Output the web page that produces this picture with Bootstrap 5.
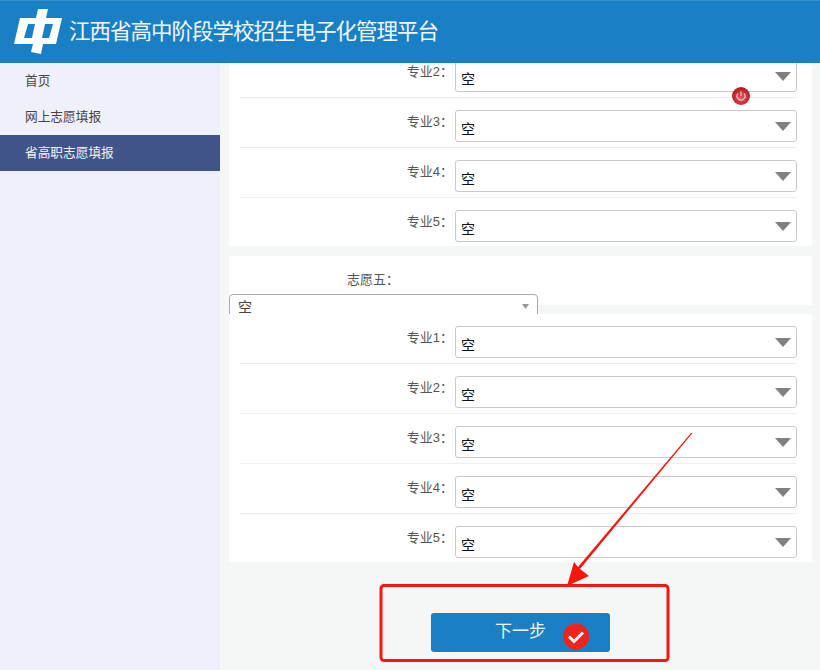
<!DOCTYPE html>
<html lang="zh-CN">
<head>
<meta charset="utf-8">
<title>江西省高中阶段学校招生电子化管理平台</title>
<link href="https://cdn.jsdelivr.net/npm/bootstrap@5.3.0/dist/css/bootstrap.min.css" rel="stylesheet">
<style>
html,body{height:100%;overflow:hidden}
body{font-family:"Liberation Sans","Noto Sans CJK SC",sans-serif;background:#f5f6f6;color:#555;width:820px;height:670px;position:relative}
.top-bar{height:63px;background:#1a80c6;border-top:1px solid #3a93d0;padding:0 0 0 14px;flex-wrap:nowrap;justify-content:flex-start;position:relative;z-index:2}
.brand-logo{display:block;flex:none}
.brand-name{font-size:21.5px;letter-spacing:-1px;color:#f2f8fc;margin-left:6px;padding:0;white-space:nowrap;line-height:28px;margin-top:-1px}
.side-col{width:220px;flex:none;background:#eff0fa}
.side-col .nav-link{height:36px;line-height:36px;padding:0 0 0 25px;font-size:12.7px;color:#444}
.side-col .nav-link.active{background:#415489;color:#f3f4f8}
.main-col{width:600px;flex:none;height:607px;overflow:hidden;padding:0 8px 0 9px}
.form-panel{background:#fff;border:0;border-radius:0;margin-bottom:10px}
.panel-first{margin-top:-15px}
.panel-major{padding:0 15px 0 11px}
.major-row{height:50px;padding-top:12px;border-bottom:1px solid #eeeeee;display:flex}
.major-row:last-child{border-bottom:0;height:48px}
.field-label{font-size:13px;color:#555;line-height:24px;white-space:nowrap;text-align:right}
.major-row .field-label{width:215px;padding-right:2px}
.form-select.pick-big{height:32px;border:1px solid #c9c9c9;border-radius:3px;padding:5px 0 0 5px;font-size:14px;line-height:24px;color:#111;background-image:url("data:image/svg+xml,%3Csvg xmlns='http://www.w3.org/2000/svg' width='16' height='9'%3E%3Cpath d='M0 0h16L8 9z' fill='%23808080'/%3E%3C/svg%3E");background-size:16px 9px;background-position:right 5px center;flex:1;min-width:0}
.panel-wish{height:49px;padding:10px 0 0 0;display:flex;margin-bottom:9px}
.panel-wish .field-label{width:170px;padding-right:0;line-height:28px;height:28px}
.form-select.pick-small{width:309px;height:28px;border:1px solid #aaa;border-radius:4px;padding:2px 0 0 8px;font-size:14px;color:#444;background-image:url("data:image/svg+xml,%3Csvg xmlns='http://www.w3.org/2000/svg' width='7' height='5'%3E%3Cpath d='M0 0h7L3.500 5z' fill='%23999'/%3E%3C/svg%3E");background-size:7px 5px;background-position:right 8px center}
.action-row{height:39px;margin-top:51px}
.next-btn{width:179px;height:39px;background:#1a7fc5;border:0;border-radius:3px;color:#eef6fb;font-size:17px;padding:0;margin-left:202px;position:relative}
.next-btn:hover{background:#1a7fc5;color:#eef6fb}
.next-label{position:absolute;left:64px;top:7px;line-height:24px}
.overlay-mark{position:absolute;left:0;top:0;z-index:3;pointer-events:none}
.power-dot{position:absolute;left:732px;top:87px;z-index:1}
.first-gap{position:absolute;left:455px;top:90px;width:342px;height:3px;z-index:1;background:repeating-linear-gradient(90deg,#fff 0 1px,#fff 1px 1px);}
</style>
</head>
<body>
<nav class="navbar top-bar">
  <svg class="brand-logo" width="49" height="48" viewBox="0 0 49 48">
    <path fill="#fff" d="M24 1h10l-2 9h16l-6 26H29l-2 10-10-2 2-8H0L6 10h16zM14 16l-4 14h8l3-14zM31 16l-3 14h7l4-14z"/>
  </svg>
  <span class="navbar-brand brand-name">江西省高中阶段学校招生电子化管理平台</span>
</nav>
<div class="d-flex">
  <aside class="side-col">
    <nav class="nav flex-column">
      <a class="nav-link" href="#">首页</a>
      <a class="nav-link" href="#">网上志愿填报</a>
      <a class="nav-link active" href="#">省高职志愿填报</a>
    </nav>
  </aside>
  <main class="main-col">
    <div class="card form-panel panel-major panel-first">
      <div class="major-row"><span class="field-label">专业2：</span><select class="form-select pick-big"><option>空</option></select></div>
      <div class="major-row"><span class="field-label">专业3：</span><select class="form-select pick-big"><option>空</option></select></div>
      <div class="major-row"><span class="field-label">专业4：</span><select class="form-select pick-big"><option>空</option></select></div>
      <div class="major-row"><span class="field-label">专业5：</span><select class="form-select pick-big"><option>空</option></select></div>
    </div>
    <div class="card form-panel panel-wish">
      <span class="field-label">志愿五：</span><select class="form-select pick-small"><option>空</option></select>
    </div>
    <div class="card form-panel panel-major">
      <div class="major-row"><span class="field-label">专业1：</span><select class="form-select pick-big"><option>空</option></select></div>
      <div class="major-row"><span class="field-label">专业2：</span><select class="form-select pick-big"><option>空</option></select></div>
      <div class="major-row"><span class="field-label">专业3：</span><select class="form-select pick-big"><option>空</option></select></div>
      <div class="major-row"><span class="field-label">专业4：</span><select class="form-select pick-big"><option>空</option></select></div>
      <div class="major-row"><span class="field-label">专业5：</span><select class="form-select pick-big"><option>空</option></select></div>
    </div>
    <div class="action-row">
      <button type="button" class="btn next-btn"><span class="next-label">下一步</span></button>
    </div>
  </main>
</div>
<svg class="power-dot" width="18" height="18" viewBox="0 0 18 18">
  <defs><radialGradient id="pg" cx=".5" cy=".6" r=".6"><stop offset="0" stop-color="#e0565c"/><stop offset="1" stop-color="#b3171d"/></radialGradient></defs>
  <circle cx="9" cy="9" r="9" fill="url(#pg)"/>
  <path d="M6 6.300a4 4 0 1 0 6 0M9 4.500v4.500" fill="none" stroke="#f5c9cb" stroke-width="1.200"/>
</svg>
<svg class="overlay-mark" width="820" height="670" viewBox="0 0 820 670">
  <rect x="381" y="585.500" width="287" height="75" rx="3" fill="none" stroke="#f6170e" stroke-width="3"/>
  <path fill="#f6170e" d="M692.500 433 580 569l9 7-22 10 7-24 4 5 113-134z"/>
  <circle cx="576" cy="636.500" r="13" fill="#f0241a"/>
  <path d="M569 636.500l5 5 9-9" fill="none" stroke="#fff" stroke-width="3"/>
</svg>
</body>
</html>
